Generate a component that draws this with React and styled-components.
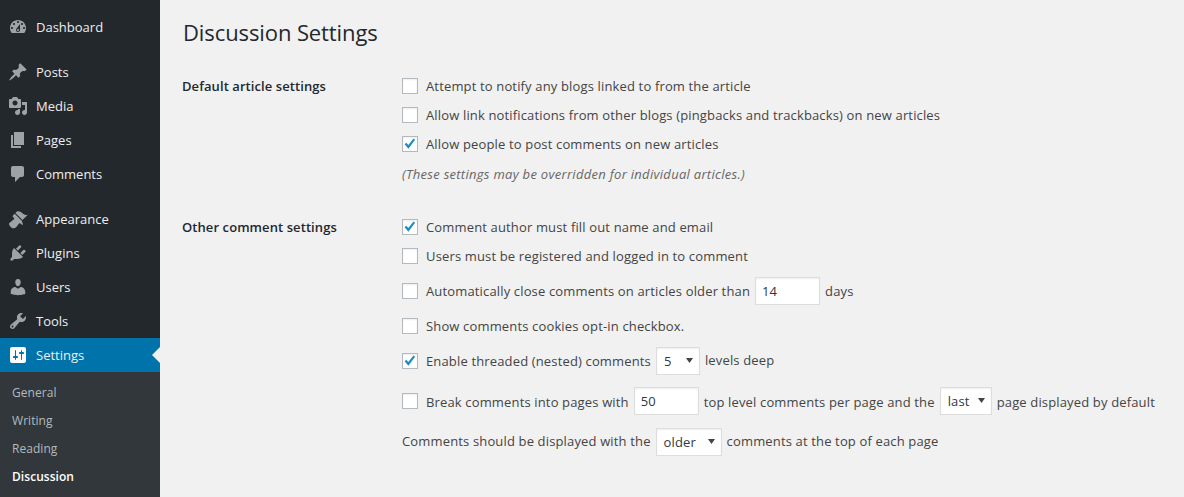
import React from "react";
import styled, { createGlobalStyle } from "styled-components";

const GlobalStyle = createGlobalStyle`
  html, body {
    margin: 0;
    height: 100%;
    overflow: hidden;
    background: #f1f1f1;
  }
  #root {
    height: 100%;
  }
`;

const icons = {
  dashboard:
    "M3.76 16h12.48c1.1-1.37 1.76-3.11 1.76-5 0-4.42-3.58-8-8-8s-8 3.58-8 8c0 1.89.66 3.63 1.76 5zM10 4c.55 0 1 .45 1 1s-.45 1-1 1-1-.45-1-1 .45-1 1-1zM6 6c.55 0 1 .45 1 1s-.45 1-1 1-1-.45-1-1 .45-1 1-1zm8 0c.55 0 1 .45 1 1s-.45 1-1 1-1-.45-1-1 .45-1 1-1zm-5.37 5.55L12 7v6c0 1.1-.9 2-2 2s-2-.9-2-2c0-.57.24-1.08.63-1.45zM4 10c.55 0 1 .45 1 1s-.45 1-1 1-1-.45-1-1 .45-1 1-1zm12 0c.55 0 1 .45 1 1s-.45 1-1 1-1-.45-1-1 .45-1 1-1zm-5 3c0-.55-.45-1-1-1s-1 .45-1 1 .45 1 1 1 1-.45 1-1z",
  posts:
    "M10.44 3.02l1.82-1.82 6.36 6.35-1.83 1.82c-1.05-.68-2.48-.57-3.41.36l-.75.75c-.92.93-1.04 2.35-.35 3.41l-1.83 1.82-2.41-2.41-2.8 2.79c-.42.42-3.38 2.71-3.8 2.29s1.86-3.39 2.28-3.81l2.79-2.79L4.1 9.36l1.83-1.82c1.05.69 2.48.57 3.4-.36l.75-.75c.93-.92 1.05-2.35.36-3.41z",
  media:
    "M13 11V4c0-.55-.45-1-1-1h-1.67L9 1H5L3.67 3H2c-.55 0-1 .45-1 1v7c0 .55.45 1 1 1h10c.55 0 1-.45 1-1zM7 4.5c1.38 0 2.5 1.12 2.5 2.5S8.38 9.5 7 9.5 4.5 8.38 4.5 7 5.62 4.5 7 4.5zM14 6h5v10.5c0 1.38-1.12 2.5-2.5 2.5S14 17.88 14 16.5s1.12-2.5 2.5-2.5c.17 0 .34.02.5.05V9h-3V6zm-4 8.05V13h2v3.5c0 1.38-1.12 2.5-2.5 2.5S7 17.88 7 16.5 8.12 14 9.5 14c.17 0 .34.02.5.05z",
  pages: "M6 15V2h10v13H6zm-1 1h8v2H3V5h2v11z",
  comments:
    "M5 2h9c1.1 0 2 .9 2 2v7c0 1.1-.9 2-2 2h-2l-5 5v-5H5c-1.1 0-2-.9-2-2V4c0-1.1.9-2 2-2z",
  appearance:
    "M14.48 11.06L7.41 3.99l1.5-1.5c.5-.56 2.3-.47 3.51.32 1.21.8 1.43 1.28 2.91 2.1 1.18.64 2.45 1.26 4.45.85zm-.71.71L6.7 4.7 4.93 6.47c-.39.39-.39 1.02 0 1.41l1.06 1.06c.39.39.39 1.03 0 1.42-.6.6-1.43 1.11-2.21 1.69-.35.26-.7.53-1.01.84C1.43 13.23.76 14.37 1.2 15.8c.42 1.36 2.05 3 3.42 3.4 1.42.44 2.57-.22 3.91-1.56.31-.31.58-.66.85-1.01.57-.79 1.08-1.61 1.69-2.21.39-.39 1.02-.39 1.41 0l1.06 1.06c.39.39 1.02.39 1.41 0z",
  plugins:
    "M13.11 4.36L9.87 7.6 8 5.73l3.24-3.24c.35-.34 1.05-.2 1.56.32.52.51.66 1.21.31 1.55zm-8 1.77l.91-1.12 9.01 9.01-1.19.84c-.71.71-2.63 1.16-3.82 1.16H6.14L4.9 17.26c-.59.59-1.54.59-2.12 0-.59-.58-.59-1.53 0-2.12l1.24-1.24v-3.88c0-1.13.4-3.19 1.09-3.89zm7.26 3.97l3.24-3.24c.34-.35 1.04-.21 1.55.31.52.51.66 1.21.31 1.55l-3.24 3.25z",
  users:
    "M10 9.25c-2.27 0-2.73-3.44-2.73-3.44C7 4.02 7.82 2 9.97 2c2.16 0 2.98 2.02 2.71 3.81 0 0-.41 3.44-2.68 3.44zm0 2.57L12.72 10c2.39 0 4.52 2.33 4.52 4.53v2.49s-3.65 1.13-7.24 1.13c-3.65 0-7.24-1.13-7.24-1.13v-2.49c0-2.25 1.94-4.48 4.47-4.48z",
  tools:
    "M16.68 9.77c-1.34 1.34-3.3 1.67-4.95.99l-5.41 6.52c-.99.99-2.59.99-3.58 0s-.99-2.59 0-3.57l6.52-5.42c-.68-1.65-.35-3.61.99-4.95 1.28-1.28 3.12-1.62 4.72-1.06l-2.89 2.89 2.82 2.82 2.86-2.87c.53 1.58.18 3.39-1.08 4.65zM3.81 16.21c.4.39 1.04.39 1.43 0 .4-.4.4-1.04 0-1.43-.39-.4-1.03-.4-1.43 0-.39.39-.39 1.03 0 1.43z",
  settings:
    "M18 16V4c0-1.1-.9-2-2-2H4c-1.1 0-2 .9-2 2v12c0 1.1.9 2 2 2h12c1.1 0 2-.9 2-2zM8 11h1c.55 0 1 .45 1 1s-.45 1-1 1H8v1.5c0 .28-.22.5-.5.5s-.5-.22-.5-.5V13H6c-.55 0-1-.45-1-1s.45-1 1-1h1V5.5c0-.28.22-.5.5-.5s.5.22.5.5V11zm5-2h-1c-.55 0-1-.45-1-1s.45-1 1-1h1V5.5c0-.28.22-.5.5-.5s.5.22.5.5V7h1c.55 0 1 .45 1 1s-.45 1-1 1h-1v5.5c0 .28-.22.5-.5.5s-.5-.22-.5-.5V9z",
};

const menuGroups = [
  [{ key: "dashboard", label: "Dashboard" }],
  [
    { key: "posts", label: "Posts" },
    { key: "media", label: "Media" },
    { key: "pages", label: "Pages" },
    { key: "comments", label: "Comments" },
  ],
  [
    { key: "appearance", label: "Appearance" },
    { key: "plugins", label: "Plugins" },
    { key: "users", label: "Users" },
    { key: "tools", label: "Tools" },
    { key: "settings", label: "Settings", active: true },
  ],
];

const subItems = ["General", "Writing", "Reading", "Discussion"];

const Checkbox = ({ checked }) => (
  <CheckBoxMark>
    {checked && (
      <svg width="16" height="16" viewBox="0 0 16 16">
        <path d="M2.6 8.2l1.7-1.5 2 2.3 5.2-6.4 1.6 1.1-6.7 9.1z" fill="#1e8cbe" />
      </svg>
    )}
  </CheckBoxMark>
);

const Select = ({ value, width }) => (
  <SelectBox $width={width}>
    <span>{value}</span>
    <svg width="7" height="5" viewBox="0 0 7 5">
      <path d="M0 0h7L3.5 5z" fill="#444" />
    </svg>
  </SelectBox>
);

const App = () => {
  return (
    <Page>
      <GlobalStyle />
      <Sidebar>
        {menuGroups.map((group, i) => (
          <MenuGroup key={i}>
            {group.map((item) => (
              <MenuItem key={item.key} $active={item.active}>
                <svg width="20" height="20" viewBox="0 0 20 20">
                  <path d={icons[item.key]} fill="currentColor" fillRule="evenodd" />
                </svg>
                <MenuLabel>{item.label}</MenuLabel>
              </MenuItem>
            ))}
          </MenuGroup>
        ))}
        <SubMenu>
          {subItems.map((item) => (
            <SubItem key={item} $current={item === "Discussion"}>
              {item}
            </SubItem>
          ))}
        </SubMenu>
      </Sidebar>

      <Main>
        <Title>Discussion Settings</Title>

        <Section>
          <SectionLabel>Default article settings</SectionLabel>
          <Fields>
            <Row>
              <Checkbox />
              Attempt to notify any blogs linked to from the article
            </Row>
            <Row>
              <Checkbox />
              Allow link notifications from other blogs (pingbacks and trackbacks) on new articles
            </Row>
            <Row $pushed>
              <Checkbox checked />
              Allow people to post comments on new articles
            </Row>
            <Note>(These settings may be overridden for individual articles.)</Note>
          </Fields>
        </Section>

        <Section>
          <SectionLabel>Other comment settings</SectionLabel>
          <Fields>
            <Row>
              <Checkbox checked />
              Comment author must fill out name and email
            </Row>
            <Row>
              <Checkbox />
              Users must be registered and logged in to comment
            </Row>
            <Row $tall>
              <Checkbox />
              Automatically close comments on articles older than
              <NumberInput defaultValue="14" />
              days
            </Row>
            <Row>
              <Checkbox />
              Show comments cookies opt-in checkbox.
            </Row>
            <Row $tall $tight>
              <Checkbox checked />
              Enable threaded (nested) comments
              <Select value="5" width={44} />
              <Text $up>levels deep</Text>
            </Row>
            <Row $tall>
              <Checkbox />
              <Text $down>Break comments into pages with</Text>
              <NumberInput defaultValue="50" />
              <Text $down>top level comments per page and the</Text>
              <Select value="last" width={52} />
              <Text $down>page displayed by default</Text>
            </Row>
            <Row $tall>
              <Text $up>Comments should be displayed with the</Text>
              <Select value="older" width={66} />
              <Text $up>comments at the top of each page</Text>
            </Row>
          </Fields>
        </Section>
      </Main>
    </Page>
  );
};

export default App;

const Page = styled.div`
  display: flex;
  height: 100%;
  font-family: "Open Sans", sans-serif;
  font-size: 13px;
  color: #444;
  background: #f1f1f1;
`;

const Sidebar = styled.nav`
  display: flex;
  flex-direction: column;
  flex: 0 0 160px;
  padding-top: 10px;
  box-sizing: border-box;
  background: #23282d;
`;

const MenuGroup = styled.div`
  & + & {
    margin-top: 11px;
  }
`;

const MenuItem = styled.div`
  position: relative;
  display: flex;
  align-items: center;
  height: 34px;
  padding-left: 8px;
  color: ${({ $active }) => ($active ? "#fff" : "#9ea3a8")};
  background: ${({ $active }) => ($active ? "#0073aa" : "transparent")};

  ${({ $active }) =>
    $active &&
    `
    &::after {
      content: "";
      position: absolute;
      right: 0;
      top: 50%;
      margin-top: -8px;
      border: 8px solid transparent;
      border-right-color: #f1f1f1;
      border-left-width: 0;
    }
  `}
`;

const MenuLabel = styled.span`
  margin-left: 8px;
  color: #eee;
  line-height: 18px;
`;

const SubMenu = styled.div`
  flex: 1;
  padding-top: 7px;
  background: #32373c;
`;

const SubItem = styled.div`
  height: 28px;
  line-height: 28px;
  padding-left: 12px;
  font-size: 12px;
  letter-spacing: 0.05px;
  color: ${({ $current }) => ($current ? "#fff" : "#b4b9be")};
  font-weight: ${({ $current }) => ($current ? 600 : 400)};
`;

const Main = styled.main`
  flex: 1;
  min-width: 0;
  padding-left: 22px;
`;

const Title = styled.h1`
  margin: 0;
  height: 72px;
  padding: 18px 0 0 1px;
  box-sizing: border-box;
  font-size: 22px;
  line-height: 29px;
  letter-spacing: -0.1px;
  font-weight: 400;
  color: #23282d;
`;

const Section = styled.section`
  display: flex;
  margin-bottom: 24px;
`;

const SectionLabel = styled.div`
  flex: 0 0 220px;
  height: 28px;
  line-height: 28px;
  font-weight: 600;
  letter-spacing: 0.08px;
  color: #23282d;
`;

const Fields = styled.div`
  flex: 1;
  min-width: 0;
  letter-spacing: 0.15px;
`;

const Row = styled.div`
  display: flex;
  align-items: center;
  height: ${({ $tall }) => ($tall ? "40px" : "28px")};
  margin-top: ${({ $pushed }) => ($pushed ? "1px" : "0")};
  margin-bottom: ${({ $tight }) => ($tight ? "0" : "1px")};
  white-space: nowrap;
`;

const Text = styled.span`
  margin-top: ${({ $down }) => ($down ? "2px" : "0")};
  margin-bottom: ${({ $up }) => ($up ? "2px" : "0")};
`;

const CheckBoxMark = styled.span`
  flex: 0 0 16px;
  width: 16px;
  height: 16px;
  margin-right: 8px;
  box-sizing: border-box;
  display: flex;
  align-items: center;
  justify-content: center;
  border: 1px solid #b4b9be;
  background: #fff;
  box-shadow: inset 0 1px 2px rgba(0, 0, 0, 0.07);

  svg {
    flex: none;
  }
`;

const Note = styled.p`
  margin: 0;
  height: 30px;
  line-height: 30px;
  font-style: italic;
  letter-spacing: 0.29px;
  color: #666;
`;

const NumberInput = styled.input`
  width: 65px;
  height: 28px;
  margin: 0 5px;
  padding: 3px 6px;
  box-sizing: border-box;
  border: 1px solid #ddd;
  background: #fff;
  box-shadow: inset 0 1px 2px rgba(0, 0, 0, 0.07);
  font: inherit;
  letter-spacing: inherit;
  color: #32373c;
  outline: none;
`;

const SelectBox = styled.div`
  display: flex;
  align-items: center;
  justify-content: space-between;
  width: ${({ $width }) => $width}px;
  height: 28px;
  margin: 0 5px;
  padding: 0 6px 0 7px;
  box-sizing: border-box;
  border: 1px solid #ddd;
  background: #fff;
  box-shadow: inset 0 1px 2px rgba(0, 0, 0, 0.07);
  color: #32373c;

  svg {
    margin-bottom: 2px;
  }
`;
